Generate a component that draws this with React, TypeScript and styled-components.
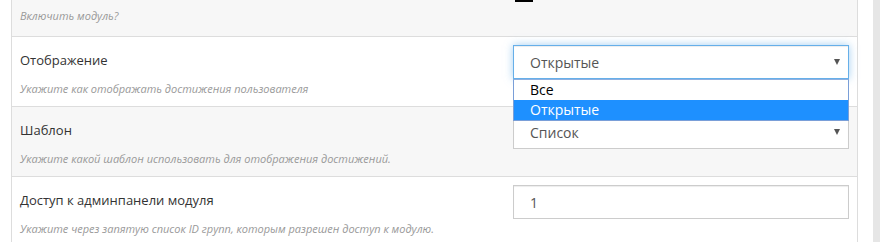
import styled, { createGlobalStyle } from "styled-components";

const GlobalStyle = createGlobalStyle`
  html, body {
    margin: 0;
    padding: 0;
    background: #ffffff;
    overflow: hidden;
  }
  body {
    font-family: "Open Sans", "Noto Sans", sans-serif;
    color: #333333;
  }
`;

const Page = styled.div`
  display: grid;
  grid-template-columns: 11px 847px 15px 7px;
  width: 880px;
  height: 242px;
`;

const Scrollbar = styled.div`
  grid-column: 4;
  background: #e6e6e6;
`;

const Panel = styled.div`
  grid-column: 2;
  border-left: 1px solid #dddddd;
  border-right: 1px solid #dddddd;
`;

const Row = styled.div<{ $grey?: boolean }>`
  display: grid;
  grid-template-columns: 1fr 336px;
  padding: 0 8px;
  background: ${(p) => (p.$grey ? "#f7f7f7" : "#ffffff")};
  border-bottom: 1px solid #dddddd;
`;

const TopRow = styled(Row)`
  height: 37px;
  box-sizing: border-box;
`;

const Info = styled.div`
  padding: 13px 0 8px;
`;

const TopInfo = styled.div`
  padding-top: 7px;
`;

const Label = styled.div`
  font-size: 13px;
  line-height: 20px;
  color: #333333;
`;

const Help = styled.div`
  margin-top: 10px;
  font-size: 11px;
  line-height: 18px;
  font-style: italic;
  color: #999999;
`;

const TopHelp = styled(Help)`
  margin-top: 0;
`;

const Field = styled.div`
  position: relative;
  padding-top: 8px;
`;

const Checkbox = styled.div`
  width: 18px;
  height: 14px;
  margin: -12px 0 0 2px;
  background: #000000;
`;

const Control = styled.div<{ $focused?: boolean }>`
  display: flex;
  align-items: center;
  justify-content: space-between;
  height: 34px;
  box-sizing: border-box;
  padding: 0 8px 0 16px;
  background: #ffffff;
  border: 1px solid ${(p) => (p.$focused ? "#66afe9" : "#cccccc")};
  box-shadow: ${(p) =>
    p.$focused
      ? "inset 0 1px 1px rgba(0,0,0,.075), 0 0 8px rgba(102,175,233,.6)"
      : "inset 0 1px 1px rgba(0,0,0,.075)"};
  font-size: 14px;
  color: #555555;
`;

const Arrow = styled.span`
  width: 0;
  height: 0;
  border-left: 3.5px solid transparent;
  border-right: 3.5px solid transparent;
  border-top: 6px solid #555555;
`;

const Menu = styled.div`
  position: absolute;
  top: 42px;
  left: 0;
  right: 0;
  z-index: 5;
  background: #ffffff;
  border: 1px solid #7a9fd8;
  border-top-color: #8fb0e0;
`;

const Option = styled.div<{ $active?: boolean }>`
  height: 20px;
  line-height: 20px;
  padding-left: 16px;
  font-size: 14px;
  color: ${(p) => (p.$active ? "#ffffff" : "#000000")};
  background: ${(p) => (p.$active ? "#1e90ff" : "transparent")};
`;

export default function App() {
  return (
    <>
      <GlobalStyle />
      <Page>
        <Panel>
          <TopRow $grey>
            <TopInfo>
              <TopHelp>Включить модуль?</TopHelp>
            </TopInfo>
            <div>
              <Checkbox />
            </div>
          </TopRow>

          <Row>
            <Info>
              <Label>Отображение</Label>
              <Help>Укажите как отображать достижения пользователя</Help>
            </Info>
            <Field>
              <Control $focused>
                <span>Открытые</span>
                <Arrow />
              </Control>
              <Menu>
                <Option>Все</Option>
                <Option $active>Открытые</Option>
              </Menu>
            </Field>
          </Row>

          <Row $grey>
            <Info>
              <Label>Шаблон</Label>
              <Help>Укажите какой шаблон использовать для отображения достижений.</Help>
            </Info>
            <Field>
              <Control>
                <span>Список</span>
                <Arrow />
              </Control>
            </Field>
          </Row>

          <Row>
            <Info>
              <Label>Доступ к админпанели модуля</Label>
              <Help>Укажите через запятую список ID групп, которым разрешен доступ к модулю.</Help>
            </Info>
            <Field>
              <Control>
                <span>1</span>
              </Control>
            </Field>
          </Row>
        </Panel>
        <Scrollbar />
      </Page>
    </>
  );
}
